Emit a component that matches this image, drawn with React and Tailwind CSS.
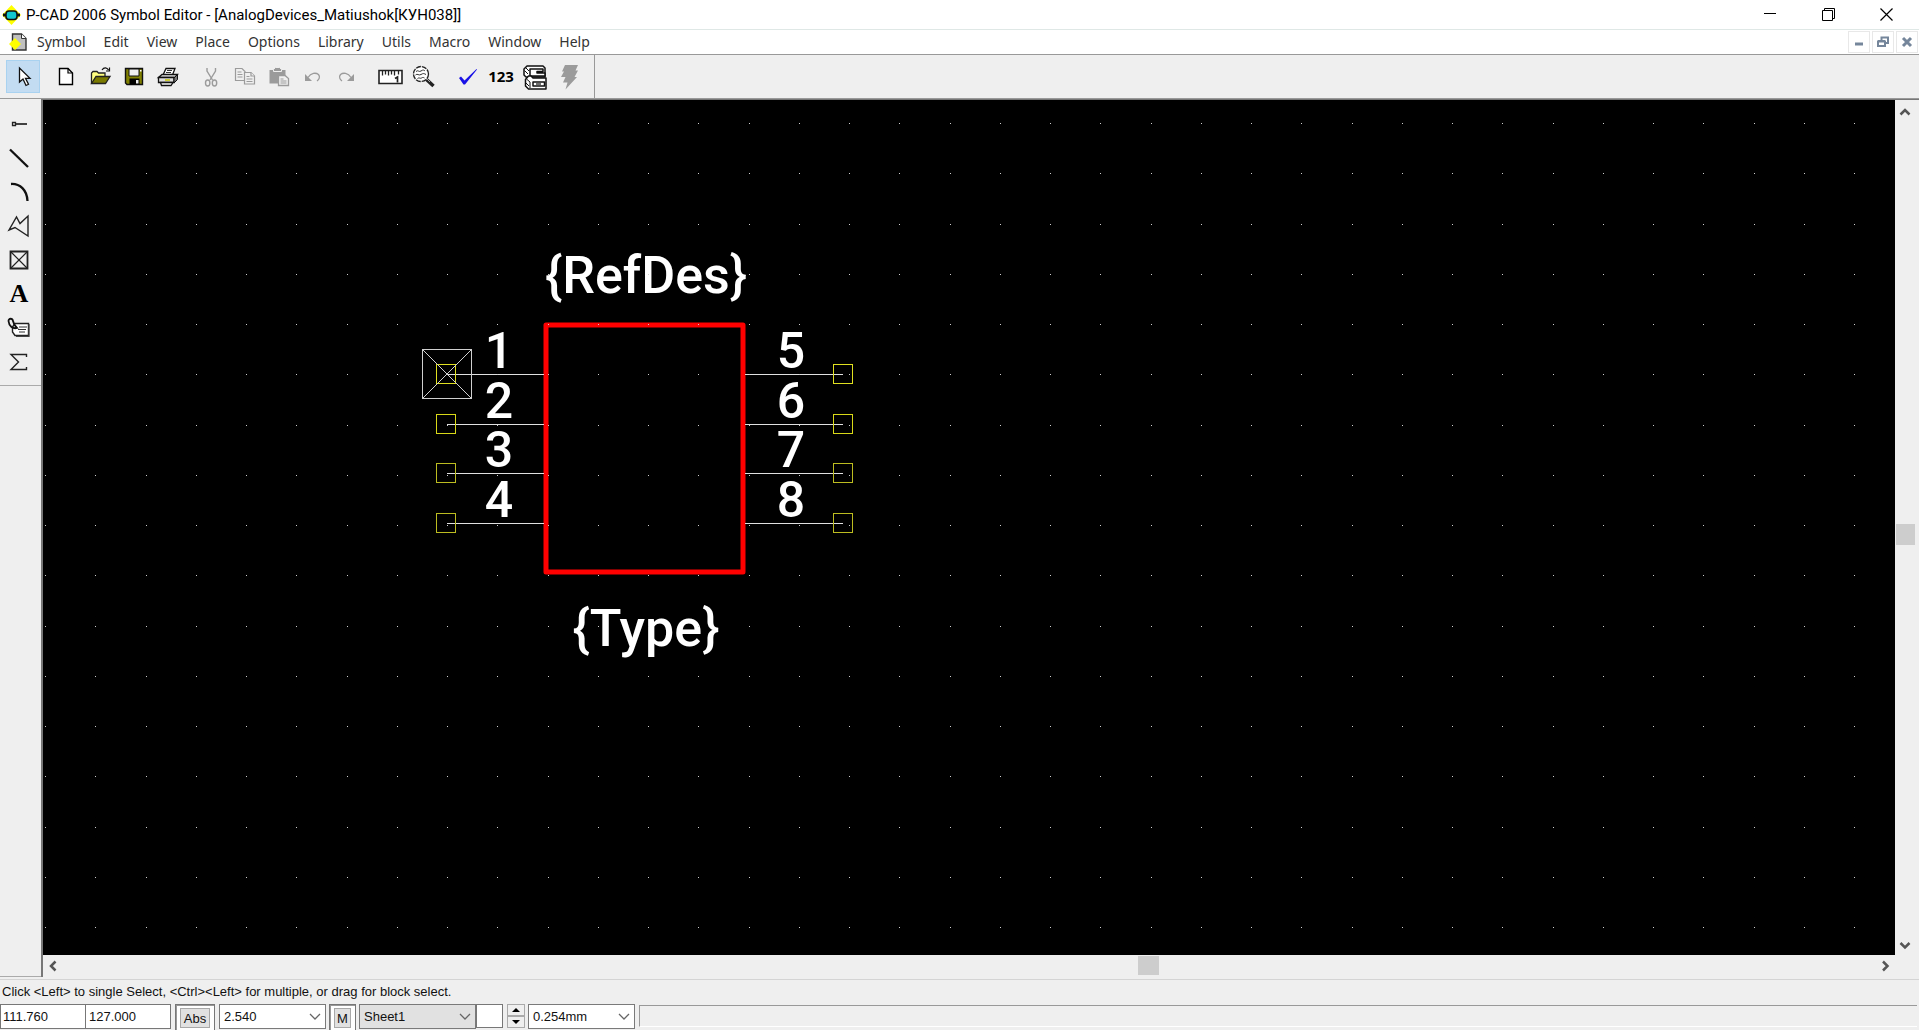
import React from "react";

const MENUS = ["Symbol", "Edit", "View", "Place", "Options", "Library", "Utils", "Macro", "Window", "Help"];

const Icon = ({ children, size = 24 }) => (
  <svg width={size} height={size} viewBox={`0 0 ${size} ${size}`} fill="none" aria-hidden="true" className="shrink-0">
    {children}
  </svg>
);

const GRAY = "#9b9b9b";

const CursorIcon = () => (
  <Icon>
    <path d="M8.500 3v14l3.500-3 3 6.500 2.500-1.200-3-6h4.500z" fill="#fff" stroke="#111" strokeWidth="1.300" />
  </Icon>
);

const NewIcon = () => (
  <Icon>
    <path d="M5.500 3.500h8.500l4.500 4.500v11.500h-13z" fill="#fff" stroke="#000" strokeWidth="1.400" />
    <path d="M14 3.500v4.500h4.500" stroke="#000" strokeWidth="1.200" />
  </Icon>
);

const OpenIcon = () => (
  <Icon>
    <path d="M3.500 18.500V8l1.500-1.500h4L10.500 8H17v3.500" fill="#ffff80" stroke="#222" strokeWidth="1.300" />
    <path d="M3.500 18.500L8 11.500h14L17.500 18.500z" fill="#7a7a00" stroke="#222" strokeWidth="1.300" />
    <path d="M14 5c2-3 5-2.500 6.500 0M21.500 2.500v3.500H18" stroke="#111" strokeWidth="1.200" />
  </Icon>
);

const SaveIcon = () => (
  <Icon>
    <path d="M3.500 3.500h17v16h-15.500l-1.500-1.500z" fill="#808000" stroke="#111" strokeWidth="1.400" />
    <path d="M7 4h10v7H7z" fill="#efefef" stroke="#111" />
    <path d="M7.500 13.500h10v6h-10z" fill="#000" />
    <path d="M14 15h2.500v3.500H14z" fill="#eee" />
    <path d="M18 5h1.500v1.500H18z" fill="#fff" />
  </Icon>
);

const PrintIcon = () => (
  <Icon>
    <path d="M7 10L10 3.500h9L16.500 10" fill="#fff" stroke="#111" strokeWidth="1.300" />
    <path d="M11 5.500h5M10 7.500h5" stroke="#333" />
    <path d="M2.500 12.500L6 9.500h15.500L19 12.500z" fill="#e8e8e8" stroke="#111" strokeWidth="1.300" />
    <path d="M2.500 12.500H18v5H2.500z" fill="#ddd" stroke="#111" strokeWidth="1.300" />
    <path d="M18 13l3.500-3.500v5L18 18z" fill="#777" stroke="#111" />
    <path d="M4.500 17.500h12.500L15 20.500H5.500z" fill="#fff" stroke="#111" strokeWidth="1.300" />
    <path d="M9 15h5" stroke="#c8c800" strokeWidth="1.500" />
  </Icon>
);

const CutIcon = () => (
  <Icon>
    <g stroke={GRAY} strokeWidth="1.400">
      <path d="M8 3v3l5.500 9M16.500 3v3L11 15" />
      <ellipse cx="8.700" cy="18" rx="2.200" ry="3" />
      <ellipse cx="15.500" cy="18" rx="2.200" ry="3" />
    </g>
  </Icon>
);

const CopyIcon = () => (
  <Icon>
    <g stroke={GRAY} strokeWidth="1.200" fill="#efefef">
      <path d="M2.500 3.500H9l3 3v9H2.500z" />
      <path d="M4.500 7h4M4.500 9.500h5M4.500 12h5" />
      <path d="M11.500 7.500H18l3.500 3.500v8h-10z" />
      <path d="M18 7.500V11h3.500M13.500 11.500h3M13.500 14h6M13.500 16.500h6" />
    </g>
  </Icon>
);

const PasteIcon = () => (
  <Icon>
    <path d="M2.500 5h16v13.500h-16z" fill={GRAY} />
    <path d="M6.500 6.500V4.500l2-2h4l2 2v2z" fill={GRAY} stroke="#efefef" />
    <path d="M11.500 10.500H18l3.500 3v7h-10z" fill="#efefef" stroke={GRAY} strokeWidth="1.300" />
    <path d="M13.500 14h3M13.500 16h6M13.500 18h6" stroke={GRAY} />
  </Icon>
);

const UndoIcon = () => (
  <Icon>
    <path d="M4 9v7h7z" fill={GRAY} />
    <path d="M7 12.500c3-5 8-5 10.500-3C19.500 12 18 14.500 16 16" stroke={GRAY} strokeWidth="1.300" />
  </Icon>
);

const RedoIcon = () => (
  <Icon>
    <path d="M19 9v7h-7z" fill={GRAY} />
    <path d="M16 12.500c-3-5-8-5-10.500-3C3.500 12 5 14.500 7 16" stroke={GRAY} strokeWidth="1.300" />
  </Icon>
);

const RulerIcon = () => (
  <Icon size={26}>
    <path d="M2 6.500h23v13H2z" fill="#fff" stroke="#222" strokeWidth="1.600" />
    <path d="M5.500 7v4.500M8.500 7v3.500M11.500 7v4.500M14.500 7v3.500M17.500 7v4.500M21.500 7v3.500" stroke="#222" strokeWidth="1.300" />
    <path d="M18 14.500l2.500-1.500v5.500" stroke="#222" strokeWidth="1.700" />
  </Icon>
);

const ZoomIcon = () => (
  <Icon size={26}>
    <circle cx="10" cy="10" r="7.500" fill="#fff" stroke="#222" strokeWidth="1.300" strokeDasharray="5 1" />
    <path d="M5 7.500c2-2 3 1 5-.5s3-1 4 0M4.500 11c2-2 3 1 5.500-.5s3-1 5 0M6.500 14.500c2-1.500 2.500.5 4-.5s2-.5 3 0" stroke="#333" />
    <path d="M15.500 15.500l7 6.500" stroke="#222" strokeWidth="3.500" />
    <path d="M16 15l3 3" stroke="#aaa" />
  </Icon>
);

const CheckIcon = () => (
  <Icon>
    <path d="M4 13l2-1.500 3.500 4L21.500 4l.5.500L10 19.500H8.500z" fill="#1a12e6" />
  </Icon>
);

const CabinetsIcon = () => (
  <Icon size={26}>
    <g stroke="#111" strokeWidth="1.500" strokeLinejoin="round">
      <path d="M2 5l3-3h16l2 2v9H4L2 11z" fill="#fff" />
      <path d="M8 5h13v2.500h-6V9h8v3H8z" fill="#fff" />
      <path d="M4 4l3 3M2.500 6.500L6 10" strokeWidth="1" />
      <path d="M3.500 15.500L6.500 12H9l2 2h13v11H6.500l-3-3z" fill="#fff" />
      <path d="M11 18h11.500v4H11z" fill="#fff" />
      <path d="M14 20h5" strokeWidth="1.200" />
      <path d="M4.500 15l3.500 3v6M4 19l3 3" strokeWidth="1" />
    </g>
  </Icon>
);

const BoltIcon = () => (
  <Icon size={26}>
    <path d="M9 1h13l-2.500 5.500H22L18.500 13H21L9.500 25.500l2-7H7L9.500 13H5l3-5.500H6z" fill={GRAY} />
  </Icon>
);

const PinIcon = () => (
  <Icon>
    <path d="M5.500 10.500h3v3h-3z" stroke="#222" strokeWidth="1.300" />
    <path d="M8.500 12H20" stroke="#222" strokeWidth="1.700" />
  </Icon>
);

const LineIcon = () => (
  <Icon>
    <path d="M3 3.500L21 21" stroke="#111" strokeWidth="2.300" />
  </Icon>
);

const ArcIcon = () => (
  <Icon>
    <path d="M4 4c9-.5 16 6 16.500 17" stroke="#111" strokeWidth="2.300" />
  </Icon>
);

const PolygonIcon = () => (
  <Icon>
    <path d="M2 16L9.500 3l3.500 6.500L21 2v20L8 13.500z" stroke="#222" strokeWidth="1.400" />
  </Icon>
);

const RefPointIcon = () => (
  <Icon>
    <path d="M3.500 3.500h17v17h-17z" stroke="#222" strokeWidth="1.800" />
    <path d="M4 4l16 16M20 4L4 20" stroke="#222" strokeWidth="1.200" />
  </Icon>
);

const TagIcon = () => (
  <Icon>
    <path d="M5.500 11L8 7.500h13.500v12H8L5.500 16z" fill="#fff" stroke="#222" strokeWidth="1.400" />
    <path d="M22 8v12.500H9" stroke="#444" strokeWidth="1.200" />
    <path d="M12 11h8M11 13.500h8M12 16h6" stroke="#333" />
    <path d="M1.500 5c0-3 4-3 4.500 0s2 5 4 7c-4 1-8-1.500-8.500-7z" stroke="#111" strokeWidth="1.800" />
  </Icon>
);

const SigmaIcon = () => (
  <Icon>
    <path d="M19.500 7V4.500H4L11.500 12 4 19.500h15.500V17" stroke="#222" strokeWidth="1.400" />
  </Icon>
);

const TOOL_GROUPS = [
  [{ label: "Select", icon: <CursorIcon />, active: true }],
  [
    { label: "New", icon: <NewIcon /> },
    { label: "Open", icon: <OpenIcon /> },
    { label: "Save", icon: <SaveIcon /> },
    { label: "Print", icon: <PrintIcon /> },
  ],
  [
    { label: "Cut", icon: <CutIcon /> },
    { label: "Copy", icon: <CopyIcon /> },
    { label: "Paste", icon: <PasteIcon /> },
    { label: "Undo", icon: <UndoIcon /> },
    { label: "Redo", icon: <RedoIcon /> },
  ],
  [
    { label: "Measure", icon: <RulerIcon /> },
    { label: "Zoom window", icon: <ZoomIcon /> },
  ],
  [
    { label: "Validate", icon: <CheckIcon /> },
    { label: "Renumber", icon: <span className="font-['Open_Sans',sans-serif] text-[15px] font-bold leading-none">123</span> },
    { label: "Attributes", icon: <CabinetsIcon /> },
    { label: "Run", icon: <BoltIcon /> },
  ],
];

const PLACE_TOOLS = [
  { label: "Place pin", icon: <PinIcon /> },
  { label: "Place line", icon: <LineIcon /> },
  { label: "Place arc", icon: <ArcIcon /> },
  { label: "Place polygon", icon: <PolygonIcon /> },
  { label: "Place ref point", icon: <RefPointIcon /> },
  { label: "Place text", icon: <span className="font-['Liberation_Serif',serif] text-[26px] font-bold leading-none">A</span> },
  { label: "Place attribute", icon: <TagIcon /> },
  { label: "Place IEEE symbol", icon: <SigmaIcon /> },
];

const GRID_STEP = 50.25;
const GRID_COLUMNS = Array.from({ length: 37 }, (_, i) => Math.round(2 + i * GRID_STEP));
const GRID_ROWS = Array.from({ length: 17 }, (_, i) => Math.round(23 + i * GRID_STEP));

const PIN_ROWS = [
  { y: 274, left: "1", right: "5", color: "#e0e020" },
  { y: 324, left: "2", right: "6", color: "#d8d818" },
  { y: 373, left: "3", right: "7", color: "#bcbc20" },
  { y: 423, left: "4", right: "8", color: "#bcbc20" },
];

function Schematic() {
  return (
    <svg className="block h-full w-full" role="img" aria-label="Symbol drawing">
      <path d="M503 225H700V472H503Z" fill="none" stroke="#f00" strokeWidth="5" strokeLinejoin="round" />
      <g fontFamily="Roboto, sans-serif" fontWeight="500" fill="#fff" textAnchor="middle">
        <text x="603" y="193" fontSize="52">{"{RefDes}"}</text>
        <text x="603" y="546" fontSize="52">{"{Type}"}</text>
        {PIN_ROWS.map((row) => (
          <React.Fragment key={row.y}>
            <text x="456" y={row.y - 6} fontSize="50">{row.left}</text>
            <text x="748" y={row.y - 6} fontSize="50">{row.right}</text>
          </React.Fragment>
        ))}
      </g>
      <g shapeRendering="crispEdges" fill="none">
        {PIN_ROWS.map((row) => (
          <g key={row.y}>
            <path d={`M404 ${row.y + 0.5}H501M702 ${row.y + 0.5}H800`} stroke="#e0e0e0" />
            <rect x="393.500" y={row.y - 9.5} width="19" height="19" stroke={row.color} />
            <rect x="790.500" y={row.y - 9.5} width="19" height="19" stroke={row.color} />
          </g>
        ))}
      </g>
      <g stroke="#d0d0d0" fill="none">
        <rect x="379.500" y="249.500" width="49" height="49" />
        <path d="M379.500 298.500l49-49M379.500 249.500l49 49" />
      </g>
      <g fill="#d0d0d0" shapeRendering="crispEdges">
        {GRID_ROWS.map((y) => GRID_COLUMNS.map((x) => <rect key={`${x}-${y}`} x={x} y={y} width="1" height="1" />))}
      </g>
    </svg>
  );
}

const Chevron = ({ d, className = "" }) => (
  <svg width="12" height="12" viewBox="0 0 12 12" fill="none" aria-hidden="true" className={className}>
    <path d={d} stroke="currentColor" strokeWidth="2.500" />
  </svg>
);

function Combo({ label, value, className }) {
  return (
    <div className={"relative h-[25px] shrink-0 border border-[#7a7a7a] " + className}>
      <select aria-label={label} defaultValue={value} className="h-full w-full appearance-none bg-transparent pl-1 leading-none outline-none">
        <option>{value}</option>
      </select>
      <svg width="12" height="8" viewBox="0 0 12 8" fill="none" aria-hidden="true" className="pointer-events-none absolute right-1 top-2">
        <path d="M1 1l5 5 5-5" stroke="#666" strokeWidth="1.300" />
      </svg>
    </div>
  );
}

function ToggleBox({ children, className }) {
  return (
    <div className={"flex h-[26px] shrink-0 items-end justify-center border border-b-0 border-[#777] bg-white px-1 pb-[2px] shadow-[inset_1px_1px_0_#999] " + className}>
      <button type="button" className="flex h-5 w-full items-center justify-center border border-[#a8a8a8] bg-[#e1e1e1] leading-none">
        {children}
      </button>
    </div>
  );
}

function TitleBar() {
  return (
    <header className="flex h-[29px] shrink-0 items-center bg-white pl-[2px] pr-1">
      <svg width="19" height="20" viewBox="0 0 19 20" aria-hidden="true">
        <path d="M9.500 0L19 10l-9.500 10L0 10z" fill="#ff0" />
        <path d="M1 10h17" stroke="#111" strokeWidth="3" />
        <rect x="4" y="6" width="11" height="8.500" rx="3" fill="#10c8d0" stroke="#111" strokeWidth="1.600" />
      </svg>
      <h1 className="ml-[5px] grow font-['Roboto',sans-serif] text-[15px] font-normal leading-5">
        P-CAD 2006 Symbol Editor - [AnalogDevices_Matiushok[КУН038]]
      </h1>
      <button type="button" aria-label="Minimize" className="flex w-[58px] justify-center">
        <svg width="13" height="13" viewBox="0 0 13 13" fill="none" stroke="#000"><path d="M0 5.500h12" /></svg>
      </button>
      <button type="button" aria-label="Restore" className="flex w-[58px] justify-center">
        <svg width="13" height="13" viewBox="0 0 13 13" fill="none" stroke="#000"><path d="M.5 2.500h10v10H.5zM2.500 2.500v-2h10v10h-2" /></svg>
      </button>
      <button type="button" aria-label="Close" className="flex w-[58px] justify-center">
        <svg width="13" height="13" viewBox="0 0 13 13" fill="none" stroke="#000" strokeWidth="1.200"><path d="M.5.500l12 12M12.500.500l-12 12" /></svg>
      </button>
    </header>
  );
}

function MenuBar() {
  return (
    <nav className="flex h-[25px] shrink-0 items-center border-t border-[#dfe8e6] bg-white pl-[9px]">
      <svg width="18" height="18" viewBox="0 0 18 18" aria-hidden="true">
        <path d="M3.500 1h9L17 5.500V17H3.500z" fill="#c0c0c0" stroke="#333" strokeWidth="1.400" />
        <path d="M12.500 1v4.500H17" fill="#fff" stroke="#333" />
        <path d="M6 5l6 6-6 6-6-6z" fill="#ff0" />
      </svg>
      <ul className="flex grow pb-px pl-px font-['Noto_Sans',sans-serif] text-sm leading-5 text-[#333]">
        {MENUS.map((name) => (
          <li key={name}>
            <button type="button" className="px-[9px]">{name}</button>
          </li>
        ))}
      </ul>
      <div className="flex gap-[2px] pr-[1px] text-[#75869b]">
        {[
          ["Minimize document", "M5 11h8", 3],
          ["Restore document", "M4 8.500h7V13H4zM4 8h7M7.500 7V4.500H14V10h-2.500M7.500 4.500H14", 2],
          ["Close document", "M5 5l8 8M13 5l-8 8", 3],
        ].map(([label, d, weight]) => (
          <button key={label} type="button" aria-label={label} className="flex h-[22px] w-[22px] items-center justify-center border border-[#e8e8e8]">
            <svg width="18" height="18" viewBox="0 0 18 18" fill="none" stroke="currentColor" strokeWidth={weight}><path d={d} /></svg>
          </button>
        ))}
      </div>
    </nav>
  );
}

function Toolbar() {
  return (
    <div role="toolbar" aria-label="Standard" className="flex h-[44px] shrink-0 border-t border-[#999]">
      <div className="flex items-center gap-[9px] border-r border-[#999] pl-[6px] pr-[8px]">
        {TOOL_GROUPS.map((group, i) => (
          <div key={i} className="flex">
            {group.map(({ label, icon, active }) => (
              <button
                key={label}
                type="button"
                aria-label={label}
                className={
                  active
                    ? "flex h-[33px] w-[34px] items-center justify-center border border-[#a9d2f0] bg-[#c3dcf2]"
                    : "flex h-[33px] w-[34px] items-center justify-center"
                }
              >
                {icon}
              </button>
            ))}
          </div>
        ))}
      </div>
    </div>
  );
}

function PlaceBar() {
  return (
    <aside className="flex w-[41px] shrink-0 flex-col border-b border-[#aaa]">
      <div role="toolbar" aria-label="Place" className="flex flex-col border-b border-[#aaa] pb-[6px] pl-[2px] pt-[8px]">
        {PLACE_TOOLS.map(({ label, icon }) => (
          <button key={label} type="button" aria-label={label} className="flex h-[34px] w-[34px] items-center justify-center">
            {icon}
          </button>
        ))}
      </div>
    </aside>
  );
}

function StatusBar() {
  return (
    <footer className="shrink-0 border-t border-[#d4d4d4] font-['Liberation_Sans',sans-serif] text-[13px] text-[#111]">
      <p className="h-[24px] pl-[2px] leading-6">
        {"Click <Left> to single Select, <Ctrl><Left> for multiple, or drag for block select."}
      </p>
      <div className="flex h-[26px] items-start">
        <input aria-label="X" defaultValue="111.760" className="h-[25px] w-[86px] border border-[#777] bg-white pl-[2px] outline-none" />
        <input aria-label="Y" defaultValue="127.000" className="mr-1 h-[25px] w-[85px] border border-l-0 border-[#777] bg-white pl-[3px] outline-none" />
        <ToggleBox className="mr-1 w-[40px]">Abs</ToggleBox>
        <Combo label="Grid" value="2.540" className="mr-[3px] w-[107px] bg-white" />
        <ToggleBox className="mr-[3px] w-[27px]">M</ToggleBox>
        <Combo label="Sheet" value="Sheet1" className="w-[117px] bg-[#e1e1e1]" />
        <button type="button" aria-label="Sheet color" className="mr-1 h-[24px] w-[27px] border border-[#777] bg-white" />
        <div className="mr-[3px] flex w-[18px] flex-col">
          <button type="button" aria-label="Next" className="flex h-3 items-center justify-center border border-[#aaa]">
            <svg width="8" height="4" viewBox="0 0 8 4"><path d="M0 4l4-4 4 4z" fill="#000" /></svg>
          </button>
          <button type="button" aria-label="Previous" className="flex h-3 items-center justify-center border border-[#aaa]">
            <svg width="8" height="4" viewBox="0 0 8 4"><path d="M0 0l4 4 4-4z" fill="#000" /></svg>
          </button>
        </div>
        <Combo label="Line width" value="0.254mm" className="mr-1 w-[107px] bg-white" />
        <div className="mr-[2px] mt-[1px] h-[22px] grow border-l border-t border-b border-b-white border-l-[#999] border-t-[#999]" />
      </div>
    </footer>
  );
}

export default function App() {
  return (
    <div className="flex h-screen flex-col overflow-hidden bg-[#efefef] text-black">
      <TitleBar />
      <MenuBar />
      <Toolbar />
      <main className="flex min-h-0 grow border-t border-[#999]">
        <PlaceBar />
        <div className="flex min-w-0 grow flex-col border-l-2 border-t border-[#777]">
          <div className="flex min-h-0 grow">
            <div className="min-w-0 grow bg-black">
              <Schematic />
            </div>
            <div className="flex w-[24px] shrink-0 flex-col items-center pr-1 text-[#555]">
              <Chevron d="M1.500 8.500L6 4l4.500 4.500" className="my-[6px]" />
              <div className="grow-[400]" />
              <div className="h-[21px] w-[19px] bg-[#cdcdcd]" />
              <div className="grow-[390]" />
              <Chevron d="M1.500 4L6 8.500 10.500 4" className="my-[4px]" />
            </div>
          </div>
          <div className="flex h-[22px] shrink-0 items-center pb-px pl-[4px] pr-[28px] text-[#555]">
            <Chevron d="M8.500 1.500L4 6l4.500 4.500" />
            <div className="grow-[1080]" />
            <div className="h-[19px] w-[21px] bg-[#cdcdcd]" />
            <div className="grow-[720]" />
            <Chevron d="M4 1.500L8.500 6 4 10.500" />
          </div>
        </div>
      </main>
      <div className="h-[2px] shrink-0" />
      <StatusBar />
    </div>
  );
}
